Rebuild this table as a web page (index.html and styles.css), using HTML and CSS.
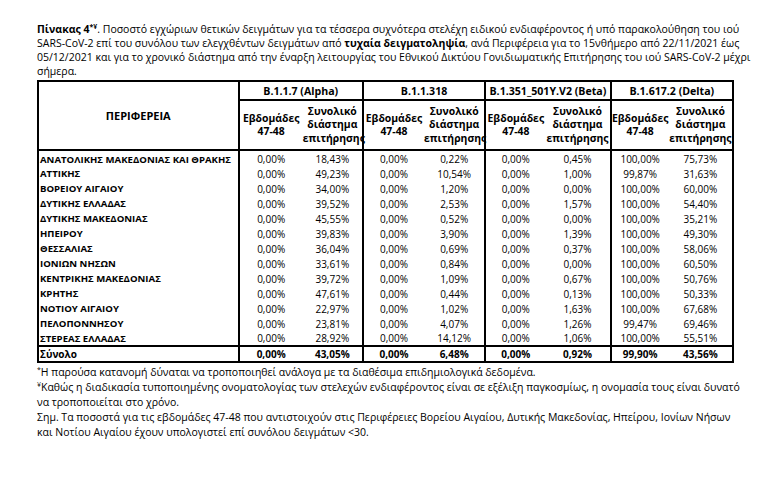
FILE: index.html
```html
<!DOCTYPE html>
<html lang="el">
<head>
<meta charset="utf-8">
<link rel="stylesheet" href="styles.css">
</head>
<body>
<div class="page">
  <p class="caption"><span class="line"><b>Πίνακας 4<sup>*¥</sup></b>. Ποσοστό εγχώριων θετικών δειγμάτων για τα τέσσερα συχνότερα στελέχη ειδικού ενδιαφέροντος ή υπό παρακολούθηση του ιού</span><span class="line">SARS-CoV-2 επί του συνόλου των ελεγχθέντων δειγμάτων από <b>τυχαία δειγματοληψία</b>, ανά Περιφέρεια για το 15νθήμερο από 22/11/2021 έως</span><span class="line">05/12/2021 και για το χρονικό διάστημα από την έναρξη λειτουργίας του Εθνικού Δικτύου Γονιδιωματικής Επιτήρησης του ιού SARS-CoV-2 μέχρι</span><span class="line">σήμερα.</span></p>
  <table class="data">
    <colgroup>
      <col class="c-reg">
      <col class="c-a1"><col class="c-a2">
      <col class="c-b1"><col class="c-b2">
      <col class="c-c1"><col class="c-c2">
      <col class="c-d1"><col class="c-d2">
    </colgroup>
    <thead>
      <tr class="h1">
        <th rowspan="2" class="reg-h">ΠΕΡΙΦΕΡΕΙΑ</th>
        <th colspan="2" class="grp">B.1.1.7 (Alpha)</th>
        <th colspan="2" class="grp">B.1.1.318</th>
        <th colspan="2" class="grp">B.1.351_501Y.V2 (Beta)</th>
        <th colspan="2" class="grp">B.1.617.2 (Delta)</th>
      </tr>
      <tr class="h2">
        <th class="sub gl">Εβδομάδες<br>47-48</th><th class="sub">Συνολικό<br>διάστημα<br>επιτήρησης</th>
        <th class="sub gl">Εβδομάδες<br>47-48</th><th class="sub">Συνολικό<br>διάστημα<br>επιτήρησης</th>
        <th class="sub gl">Εβδομάδες<br>47-48</th><th class="sub">Συνολικό<br>διάστημα<br>επιτήρησης</th>
        <th class="sub gl">Εβδομάδες<br>47-48</th><th class="sub">Συνολικό<br>διάστημα<br>επιτήρησης</th>
      </tr>
    </thead>
    <tbody>
      <tr class="first"><th>ΑΝΑΤΟΛΙΚΗΣ ΜΑΚΕΔΟΝΙΑΣ ΚΑΙ ΘΡΑΚΗΣ</th><td class="gl">0,00%</td><td>18,43%</td><td class="gl">0,00%</td><td>0,22%</td><td class="gl">0,00%</td><td>0,45%</td><td class="gl">100,00%</td><td>75,73%</td></tr>
      <tr><th>ΑΤΤΙΚΗΣ</th><td class="gl">0,00%</td><td>49,23%</td><td class="gl">0,00%</td><td>10,54%</td><td class="gl">0,00%</td><td>1,00%</td><td class="gl">99,87%</td><td>31,63%</td></tr>
      <tr><th>ΒΟΡΕΙΟΥ ΑΙΓΑΙΟΥ</th><td class="gl">0,00%</td><td>34,00%</td><td class="gl">0,00%</td><td>1,20%</td><td class="gl">0,00%</td><td>0,00%</td><td class="gl">100,00%</td><td>60,00%</td></tr>
      <tr><th>ΔΥΤΙΚΗΣ ΕΛΛΑΔΑΣ</th><td class="gl">0,00%</td><td>39,52%</td><td class="gl">0,00%</td><td>2,53%</td><td class="gl">0,00%</td><td>1,57%</td><td class="gl">100,00%</td><td>54,40%</td></tr>
      <tr><th>ΔΥΤΙΚΗΣ ΜΑΚΕΔΟΝΙΑΣ</th><td class="gl">0,00%</td><td>45,55%</td><td class="gl">0,00%</td><td>0,52%</td><td class="gl">0,00%</td><td>0,00%</td><td class="gl">100,00%</td><td>35,21%</td></tr>
      <tr><th>ΗΠΕΙΡΟΥ</th><td class="gl">0,00%</td><td>39,83%</td><td class="gl">0,00%</td><td>3,90%</td><td class="gl">0,00%</td><td>1,39%</td><td class="gl">100,00%</td><td>49,30%</td></tr>
      <tr><th>ΘΕΣΣΑΛΙΑΣ</th><td class="gl">0,00%</td><td>36,04%</td><td class="gl">0,00%</td><td>0,69%</td><td class="gl">0,00%</td><td>0,37%</td><td class="gl">100,00%</td><td>58,06%</td></tr>
      <tr><th>ΙΟΝΙΩΝ ΝΗΣΩΝ</th><td class="gl">0,00%</td><td>33,61%</td><td class="gl">0,00%</td><td>0,84%</td><td class="gl">0,00%</td><td>0,00%</td><td class="gl">100,00%</td><td>60,50%</td></tr>
      <tr><th>ΚΕΝΤΡΙΚΗΣ ΜΑΚΕΔΟΝΙΑΣ</th><td class="gl">0,00%</td><td>39,72%</td><td class="gl">0,00%</td><td>1,09%</td><td class="gl">0,00%</td><td>0,67%</td><td class="gl">100,00%</td><td>50,76%</td></tr>
      <tr><th>ΚΡΗΤΗΣ</th><td class="gl">0,00%</td><td>47,61%</td><td class="gl">0,00%</td><td>0,44%</td><td class="gl">0,00%</td><td>0,13%</td><td class="gl">100,00%</td><td>50,33%</td></tr>
      <tr><th>ΝΟΤΙΟΥ ΑΙΓΑΙΟΥ</th><td class="gl">0,00%</td><td>22,97%</td><td class="gl">0,00%</td><td>1,02%</td><td class="gl">0,00%</td><td>1,63%</td><td class="gl">100,00%</td><td>67,68%</td></tr>
      <tr><th>ΠΕΛΟΠΟΝΝΗΣΟΥ</th><td class="gl">0,00%</td><td>23,81%</td><td class="gl">0,00%</td><td>4,07%</td><td class="gl">0,00%</td><td>1,26%</td><td class="gl">99,47%</td><td>69,46%</td></tr>
      <tr><th>ΣΤΕΡΕΑΣ ΕΛΛΑΔΑΣ</th><td class="gl">0,00%</td><td>28,92%</td><td class="gl">0,00%</td><td>14,12%</td><td class="gl">0,00%</td><td>1,06%</td><td class="gl">100,00%</td><td>55,51%</td></tr>
      <tr class="total"><th>Σύνολο</th><td class="gl">0,00%</td><td>43,05%</td><td class="gl">0,00%</td><td>6,48%</td><td class="gl">0,00%</td><td>0,92%</td><td class="gl">99,90%</td><td>43,56%</td></tr>
    </tbody>
  </table>
  <div class="notes">
    <p class="note"><sup>*</sup>Η παρούσα κατανομή δύναται να τροποποιηθεί ανάλογα με τα διαθέσιμα επιδημιολογικά δεδομένα.</p>
    <p class="note"><sup>¥</sup>Καθώς η διαδικασία τυποποιημένης ονοματολογίας των στελεχών ενδιαφέροντος είναι σε εξέλιξη παγκοσμίως, η ονομασία τους είναι δυνατό</p>
    <p class="note">να τροποποιείται στο χρόνο.</p>
    <p class="note">Σημ. Τα ποσοστά για τις εβδομάδες 47-48 που αντιστοιχούν στις Περιφέρειες Βορείου Αιγαίου, Δυτικής Μακεδονίας, Ηπείρου, Ιονίων Νήσων</p>
    <p class="note">και Νοτίου Αιγαίου έχουν υπολογιστεί επί συνόλου δειγμάτων &lt;30.</p>
  </div>
</div>
</body>
</html>
```

FILE: styles.css
```css
html, body {
  margin: 0;
  padding: 0;
  background: #fff;
}

body {
  font-family: "Open Sans", "Noto Sans", sans-serif;
  color: #000;
  font-weight: 500;
}

.page {
  padding: 22px 0 0 37px;
}

.caption {
  margin: 0;
  font-size: 10.5px;
  line-height: 14px;
}

.caption .line {
  display: block;
  white-space: nowrap;
}

.caption b {
  font-weight: 700;
}

.caption sup {
  font-size: 7px;
  line-height: 0;
  vertical-align: 4px;
}

.data {
  margin-top: 2px;
  border-collapse: collapse;
  table-layout: fixed;
  width: 697px;
  border: 2px solid #000;
  font-size: 10px;
}

.c-reg { width: 200px; }
.c-a1 { width: 64px; }
.c-a2 { width: 60px; }
.c-b1 { width: 61px; }
.c-b2 { width: 61px; }
.c-c1 { width: 60px; }
.c-c2 { width: 65px; }
.c-d1 { width: 58px; }
.c-d2 { width: 64px; }

.data th,
.data td {
  padding: 0;
  white-space: nowrap;
}

.data thead th {
  font-weight: 700;
  text-align: center;
  border-bottom: 2px solid #000;
  font-size: 10.4px;
}

.data .reg-h {
  border-right: 2px solid #000;
  font-size: 11px;
}

.data .h1 th.grp {
  height: 17px;
  border-left: 2px solid #000;
  font-size: 10.6px;
}

.data .h2 th {
  height: 48px;
  line-height: 13.5px;
}

.data .gl {
  border-left: 2px solid #000;
}

.data tbody th {
  text-align: left;
  font-weight: 700;
  font-size: 9.6px;
  padding-left: 1px;
  border-right: 2px solid #000;
  overflow: hidden;
}

.data tbody td {
  text-align: center;
}

.data tbody tr {
  height: 15px;
}

.data tbody tr.first th,
.data tbody tr.first td {
  padding-top: 1px;
}

.data tr.total {
  border-top: 2px solid #000;
  height: 14px;
}

.data tr.total th {
  font-size: 10px;
}

.data tr.total td {
  font-weight: 700;
}

.notes {
  margin-top: 2px;
}

.note {
  margin: 0;
  font-size: 10.5px;
  line-height: 15px;
  white-space: nowrap;
}

.note sup {
  font-size: 7px;
  line-height: 0;
  vertical-align: 4px;
}
```
